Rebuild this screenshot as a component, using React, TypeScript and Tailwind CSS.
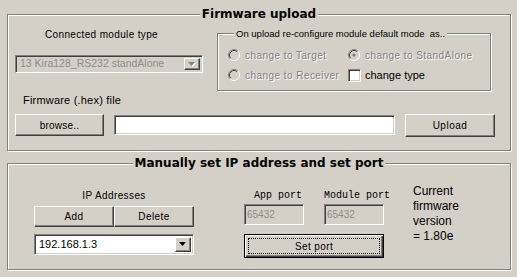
import React from "react";

const sunken =
  "border border-t-[#808080] border-l-[#808080] border-b-white border-r-white shadow-[inset_1px_1px_0_#404040,inset_-1px_-1px_0_#d4d0c8]";
const raised =
  "border border-t-white border-l-white border-b-[#404040] border-r-[#404040] shadow-[inset_-1px_-1px_0_#808080]";
const group =
  "relative border border-[#808080] shadow-[1px_1px_0_#fff,inset_1px_1px_0_#fff]";
const disabledText = "text-[#808080] [text-shadow:1px_1px_0_#fff] tracking-[0.45px] whitespace-nowrap";

function Arrow({ disabled }: { disabled?: boolean }) {
  return (
    <svg width="8" height="5" viewBox="0 0 8 5">
      {disabled && <path d="M1 1h7L4.5 5z" fill="#fff" />}
      <path d="M0 0h7L3.5 4z" fill={disabled ? "#808080" : "#000"} />
    </svg>
  );
}

function Radio({ checked }: { checked?: boolean }) {
  return (
    <svg width="12" height="12" viewBox="0 0 12 12" className="shrink-0">
      <circle cx="6" cy="6" r="4.5" fill="#d4d0c8" />
      <path d="M2.11 9.89A5.5 5.5 0 0 1 9.89 2.11" stroke="#808080" fill="none" />
      <path d="M9.89 2.11A5.5 5.5 0 0 1 2.11 9.89" stroke="#fff" fill="none" />
      <path d="M2.82 9.18A4.5 4.5 0 0 1 9.18 2.82" stroke="#404040" fill="none" />
      <path d="M9.18 2.82A4.5 4.5 0 0 1 2.82 9.18" stroke="#d4d0c8" fill="none" />
      {checked && <circle cx="6" cy="6" r="1.6" fill="#808080" />}
    </svg>
  );
}

function Combo({
  text,
  disabled,
  className,
}: {
  text: string;
  disabled?: boolean;
  className: string;
}) {
  return (
    <div
      className={`${sunken} ${className} flex items-stretch p-[2px] ${
        disabled ? "bg-[#d4d0c8]" : "bg-white"
      }`}
    >
      <div
        className={`flex-1 flex items-center pl-[2px] whitespace-nowrap overflow-hidden ${
          disabled ? "text-[10.5px] text-[#8c8c8c]" : "text-[11px] text-black"
        }`}
      >
        {text}
      </div>
      <div className={`${raised} w-[16px] bg-[#d4d0c8] flex items-center justify-center`}>
        <Arrow disabled={disabled} />
      </div>
    </div>
  );
}

export default function App() {
  return (
    <div className="w-[517px] h-[277px] bg-[#d4d0c8] overflow-hidden pt-[14px] pl-[7px] font-['Liberation_Sans',Arial,sans-serif] text-black">
      {/* Firmware upload */}
      <div className={`${group} w-[504px] h-[137px]`}>
        <div className="absolute top-[-8px] left-0 right-0 flex justify-center">
          <span className="bg-[#d4d0c8] px-[2px] text-[12px] leading-[15px] font-bold font-['DejaVu_Sans',Verdana,sans-serif]">
            Firmware upload
          </span>
        </div>

        <div className="flex items-start">
          <div className="ml-[7px] w-[188px] flex flex-col">
            <div className="mt-[13px] pl-[30px] text-[10px] leading-[13px] tracking-[0.35px] whitespace-nowrap">
              Connected module type
            </div>
            <Combo
              disabled
              text="13 Kira128_RS232 standAlone"
              className="mt-[14px] h-[18px] w-[188px]"
            />
          </div>

          <div className={`${group} ml-[14px] mt-[18px] w-[274px] h-[58px]`}>
            <span className="absolute top-[-7px] left-[16px] bg-[#d4d0c8] px-[2px] text-[9.5px] leading-[13px] whitespace-pre">
              {"On upload re-configure module default mode  as.."}
            </span>
            <div className="pt-[11px] grid grid-cols-[130px_1fr] text-[10px]">
              <div className="h-[20px] pl-[10px] flex items-center gap-[5px]">
                <Radio />
                <span className={disabledText}>change to Target</span>
              </div>
              <div className="h-[20px] flex items-center gap-[5px]">
                <Radio checked />
                <span className={disabledText}>change to StandAlone</span>
              </div>
              <div className="h-[20px] pl-[10px] flex items-center gap-[5px]">
                <Radio />
                <span className={disabledText}>change to Receiver</span>
              </div>
              <div className="h-[20px] flex items-center gap-[4px]">
                <div className={`${sunken} w-[13px] h-[13px] bg-white`} />
                <span className="text-[11px]">change type</span>
              </div>
            </div>
          </div>
        </div>

        <div className="mt-[2px] ml-[15px] text-[11px] leading-[14px] tracking-[0.2px]">
          Firmware (.hex) file
        </div>

        <div className="mt-[7px] flex items-start">
          <button
            className={`${raised} ml-[7px] w-[89px] h-[22px] bg-[#d4d0c8] text-[10px] tracking-[0.2px] flex items-center justify-center`}
          >
            browse..
          </button>
          <div className={`${sunken} ml-[10px] mt-[1px] w-[281px] h-[20px] bg-white`} />
          <button
            className={`${raised} ml-[10px] w-[90px] h-[23px] bg-[#d4d0c8] text-[10px] tracking-[0.5px] flex items-center justify-center`}
          >
            Upload
          </button>
        </div>
      </div>

      {/* Manually set IP */}
      <div className={`${group} mt-[12px] w-[504px] h-[107px]`}>
        <div className="absolute top-[-8px] left-0 right-0 flex justify-center">
          <span className="bg-[#d4d0c8] px-[2px] text-[12px] leading-[15px] font-bold font-['DejaVu_Sans',Verdana,sans-serif]">
            Manually set IP address and set port
          </span>
        </div>

        <div className="flex items-start">
          <div className="ml-[26px] w-[160px] flex flex-col">
            <div className="mt-[25px] text-center text-[10px] leading-[13px] tracking-[0.4px]">
              IP Addresses
            </div>
            <div className="mt-[4px] flex">
              <button
                className={`${raised} w-[80px] h-[21px] bg-[#d4d0c8] text-[10px] tracking-[0.4px] flex items-center justify-center`}
              >
                Add
              </button>
              <button
                className={`${raised} w-[80px] h-[21px] bg-[#d4d0c8] text-[10px] tracking-[0.4px] flex items-center justify-center`}
              >
                Delete
              </button>
            </div>
            <Combo text="192.168.1.3" className="mt-[7px] h-[21px] w-[160px]" />
          </div>

          <div className="ml-[50px] w-[140px] flex flex-col">
            <div className="mt-[25px] flex text-[10px] leading-[13px] whitespace-nowrap font-['Liberation_Mono','Courier_New',monospace]">
              <span className="w-[80px] shrink-0 pl-[10px]">App port</span>
              <span>Module port</span>
            </div>
            <div className="mt-[2px] flex">
              <div
                className={`${sunken} w-[60px] h-[21px] bg-[#d4d0c8] text-[10px] text-[#8c8c8c] flex items-center pl-[2px]`}
              >
                65432
              </div>
              <div
                className={`${sunken} ml-[20px] w-[60px] h-[21px] bg-[#d4d0c8] text-[10px] text-[#8c8c8c] flex items-center pl-[2px]`}
              >
                65432
              </div>
            </div>
            <button className="mt-[9px] w-[140px] h-[24px] border border-black bg-[#d4d0c8] shadow-[inset_1px_1px_0_#fff,inset_-1px_-1px_0_#404040,inset_-2px_-2px_0_#808080] p-[3px] flex">
              <span className="flex-1 border border-dotted border-black flex items-center justify-center text-[10px] tracking-[0.4px]">
                Set port
              </span>
            </button>
          </div>

          <div className="ml-[29px] mt-[20px] text-[12px] leading-[15px]">
            <div>Current</div>
            <div>firmware</div>
            <div>version</div>
            <div>= 1.80e</div>
          </div>
        </div>
      </div>
    </div>
  );
}
